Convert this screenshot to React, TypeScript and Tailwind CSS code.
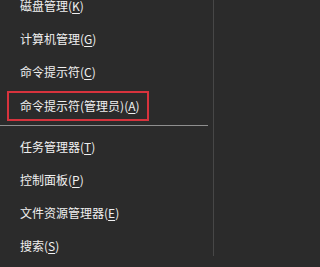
import React from 'react';

interface MenuItem {
  label: string;
  key: string;
  highlight?: boolean;
}

const topItems: MenuItem[] = [
  { label: '磁盘管理', key: 'K' },
  { label: '计算机管理', key: 'G' },
  { label: '命令提示符', key: 'C' },
  { label: '命令提示符(管理员)', key: 'A', highlight: true },
];

const bottomItems: MenuItem[] = [
  { label: '任务管理器', key: 'T' },
  { label: '控制面板', key: 'P' },
  { label: '文件资源管理器', key: 'E' },
  { label: '搜索', key: 'S' },
];

const Label: React.FC<{ item: MenuItem }> = ({ item }) => (
  <span className="whitespace-nowrap">
    {item.label}(<span className="underline underline-offset-2">{item.key}</span>)
  </span>
);

const Row: React.FC<{ item: MenuItem }> = ({ item }) => {
  if (item.highlight) {
    return (
      <div className="h-[33px] flex items-center pl-[7px]">
        <div className="w-[142px] h-[30px] mt-[3px] border-2 border-[#d7333d] flex items-center pl-[11px]">
          <Label item={item} />
        </div>
      </div>
    );
  }
  return (
    <div className="h-[33px] flex items-center pl-[20px]">
      <Label item={item} />
    </div>
  );
};

export default function App() {
  return (
    <div
      className="w-full min-w-[217px] h-[267px] overflow-hidden bg-[#2b2b2b] text-[#f0f0f0] text-[12px]"
      style={{ fontFamily: '"Noto Sans CJK SC", "Noto Sans", sans-serif' }}
    >
      <div className="w-[214px] h-full border-r border-[#474747] -mt-[11px]">
        {topItems.map((item) => (
          <Row key={item.key} item={item} />
        ))}
        <div className="py-[4px] pr-[5px]">
          <div className="h-px bg-[#8f8f8f]" />
        </div>
        {bottomItems.map((item) => (
          <Row key={item.key} item={item} />
        ))}
      </div>
    </div>
  );
}
